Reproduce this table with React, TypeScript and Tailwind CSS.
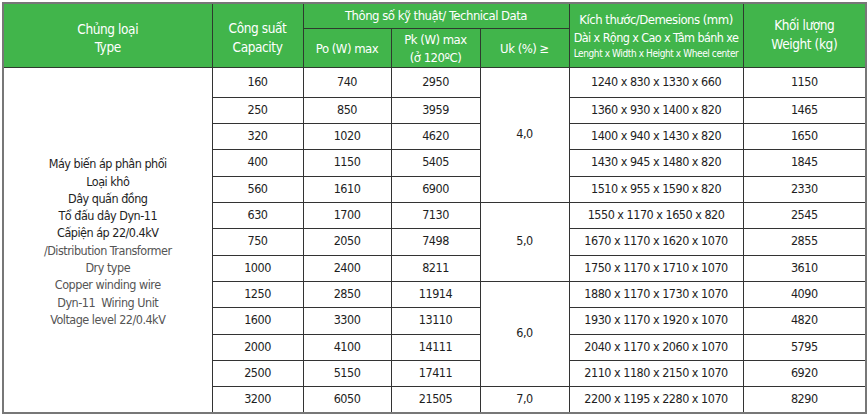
import React from "react";

const rows = [
  ["160", "740", "2950", "1240 x 830 x 1330 x 660", "1150"],
  ["250", "850", "3959", "1360 x 930 x 1400 x 820", "1465"],
  ["320", "1020", "4620", "1400 x 940 x 1430 x 820", "1650"],
  ["400", "1150", "5405", "1430 x 945 x 1480 x 820", "1845"],
  ["560", "1610", "6900", "1510 x 955 x 1590 x 820", "2330"],
  ["630", "1700", "7130", "1550 x 1170 x 1650 x 820", "2545"],
  ["750", "2050", "7498", "1670 x 1170 x 1620 x 1070", "2855"],
  ["1000", "2400", "8211", "1750 x 1170 x 1710 x 1070", "3610"],
  ["1250", "2850", "11914", "1880 x 1170 x 1730 x 1070", "4090"],
  ["1600", "3300", "13110", "1930 x 1170 x 1920 x 1070", "4820"],
  ["2000", "4100", "14111", "2040 x 1170 x 2060 x 1070", "5795"],
  ["2500", "5150", "17411", "2110 x 1180 x 2150 x 1070", "6920"],
  ["3200", "6050", "21505", "2200 x 1195 x 2280 x 1070", "8290"],
];

const heights = [30, 26, 26, 27, 26, 26, 27, 26, 26, 27, 26, 26, 27];

const uk: Record<number, [string, number]> = {
  0: ["4,0", 5],
  5: ["5,0", 3],
  8: ["6,0", 4],
  12: ["7,0", 1],
};

const td = "border border-[#333] text-center align-middle p-0 whitespace-nowrap";
const th = "border border-[#2e3b2e] text-center align-middle p-0 font-normal whitespace-nowrap";

export default function App() {
  return (
    <div
      className="bg-white w-[867px] h-[416px] pt-[2px] pl-[2px] text-[12.5px] tracking-[-0.5px] text-[#1e1e1e] overflow-hidden"
      style={{ fontFamily: '"DejaVu Sans Condensed","DejaVu Sans",sans-serif' }}
    >
      <table className="table-fixed border-collapse w-[863px] border-2 border-[#777]">
        <colgroup>
          <col className="w-[209px]" />
          <col className="w-[91px]" />
          <col className="w-[88px]" />
          <col className="w-[89px]" />
          <col className="w-[89px]" />
          <col className="w-[174px]" />
          <col className="w-[123px]" />
        </colgroup>
        <thead className="bg-[#41b54b] text-white text-[13.5px] tracking-[-0.4px] leading-[18px]">
          <tr className="h-[25px]">
            <th rowSpan={2} className={th + " pt-[6px]"}>
              <div>Chủng loại</div>
              <div>Type</div>
            </th>
            <th rowSpan={2} className={th + " pt-[6px]"}>
              <div>Công suất</div>
              <div className="leading-[20px]">Capacity</div>
            </th>
            <th colSpan={3} className={th + " text-[13px] tracking-[-0.5px]"}>
              Thông số kỹ thuật/ Technical Data
            </th>
            <th rowSpan={2} className={th + " pt-[2px]"}>
              <div className="leading-[18px] text-[13px] tracking-[-0.5px]">Kích thước/Demesions (mm)</div>
              <div className="leading-[17px] text-[12.5px] tracking-[-0.6px]">Dài x Rộng x Cao x Tâm bánh xe</div>
              <div className="text-[10px] leading-[15px] tracking-[-0.4px]">
                Lenght x Width x Height x Wheel center
              </div>
            </th>
            <th rowSpan={2} className={th}>
              <div>Khối lượng</div>
              <div className="leading-[20px]">Weight (kg)</div>
            </th>
          </tr>
          <tr className="h-[39px]">
            <th className={th + " text-[13px] tracking-[-0.5px] pt-[2px]"}>Po (W) max</th>
            <th className={th + " text-[13px] tracking-[-0.5px] pt-[2px]"}>
              <div>Pk (W) max</div>
              <div>(ở 120ºC)</div>
            </th>
            <th className={th + " text-[13px] tracking-[-0.5px] pt-[2px]"}>Uk (%) ≥</th>
          </tr>
        </thead>
        <tbody>
          {rows.map((r, i) => (
            <tr key={i} style={{ height: heights[i] }}>
              {i === 0 && (
                <td rowSpan={13} className={td + " leading-[17.3px] pt-[4px]"}>
                  <div>Máy biến áp phân phối</div>
                  <div>Loại khô</div>
                  <div>Dây quấn đồng</div>
                  <div>Tổ đấu dây Dyn-11</div>
                  <div>Cấpiện áp 22/0.4kV</div>
                  <div className="text-[#555]">/Distribution Transformer</div>
                  <div className="text-[#555]">Dry type</div>
                  <div className="text-[#555]">Copper winding wire</div>
                  <div className="text-[#555]">Dyn-11&nbsp; Wiring Unit</div>
                  <div className="text-[#555]">Voltage level 22/0.4kV</div>
                </td>
              )}
              <td className={td}>{r[0]}</td>
              <td className={td}>{r[1]}</td>
              <td className={td}>{r[2]}</td>
              {uk[i] && (
                <td rowSpan={uk[i][1]} className={td}>
                  {uk[i][0]}
                </td>
              )}
              <td className={td}>{r[3]}</td>
              <td className={td}>{r[4]}</td>
            </tr>
          ))}
        </tbody>
      </table>
    </div>
  );
}
